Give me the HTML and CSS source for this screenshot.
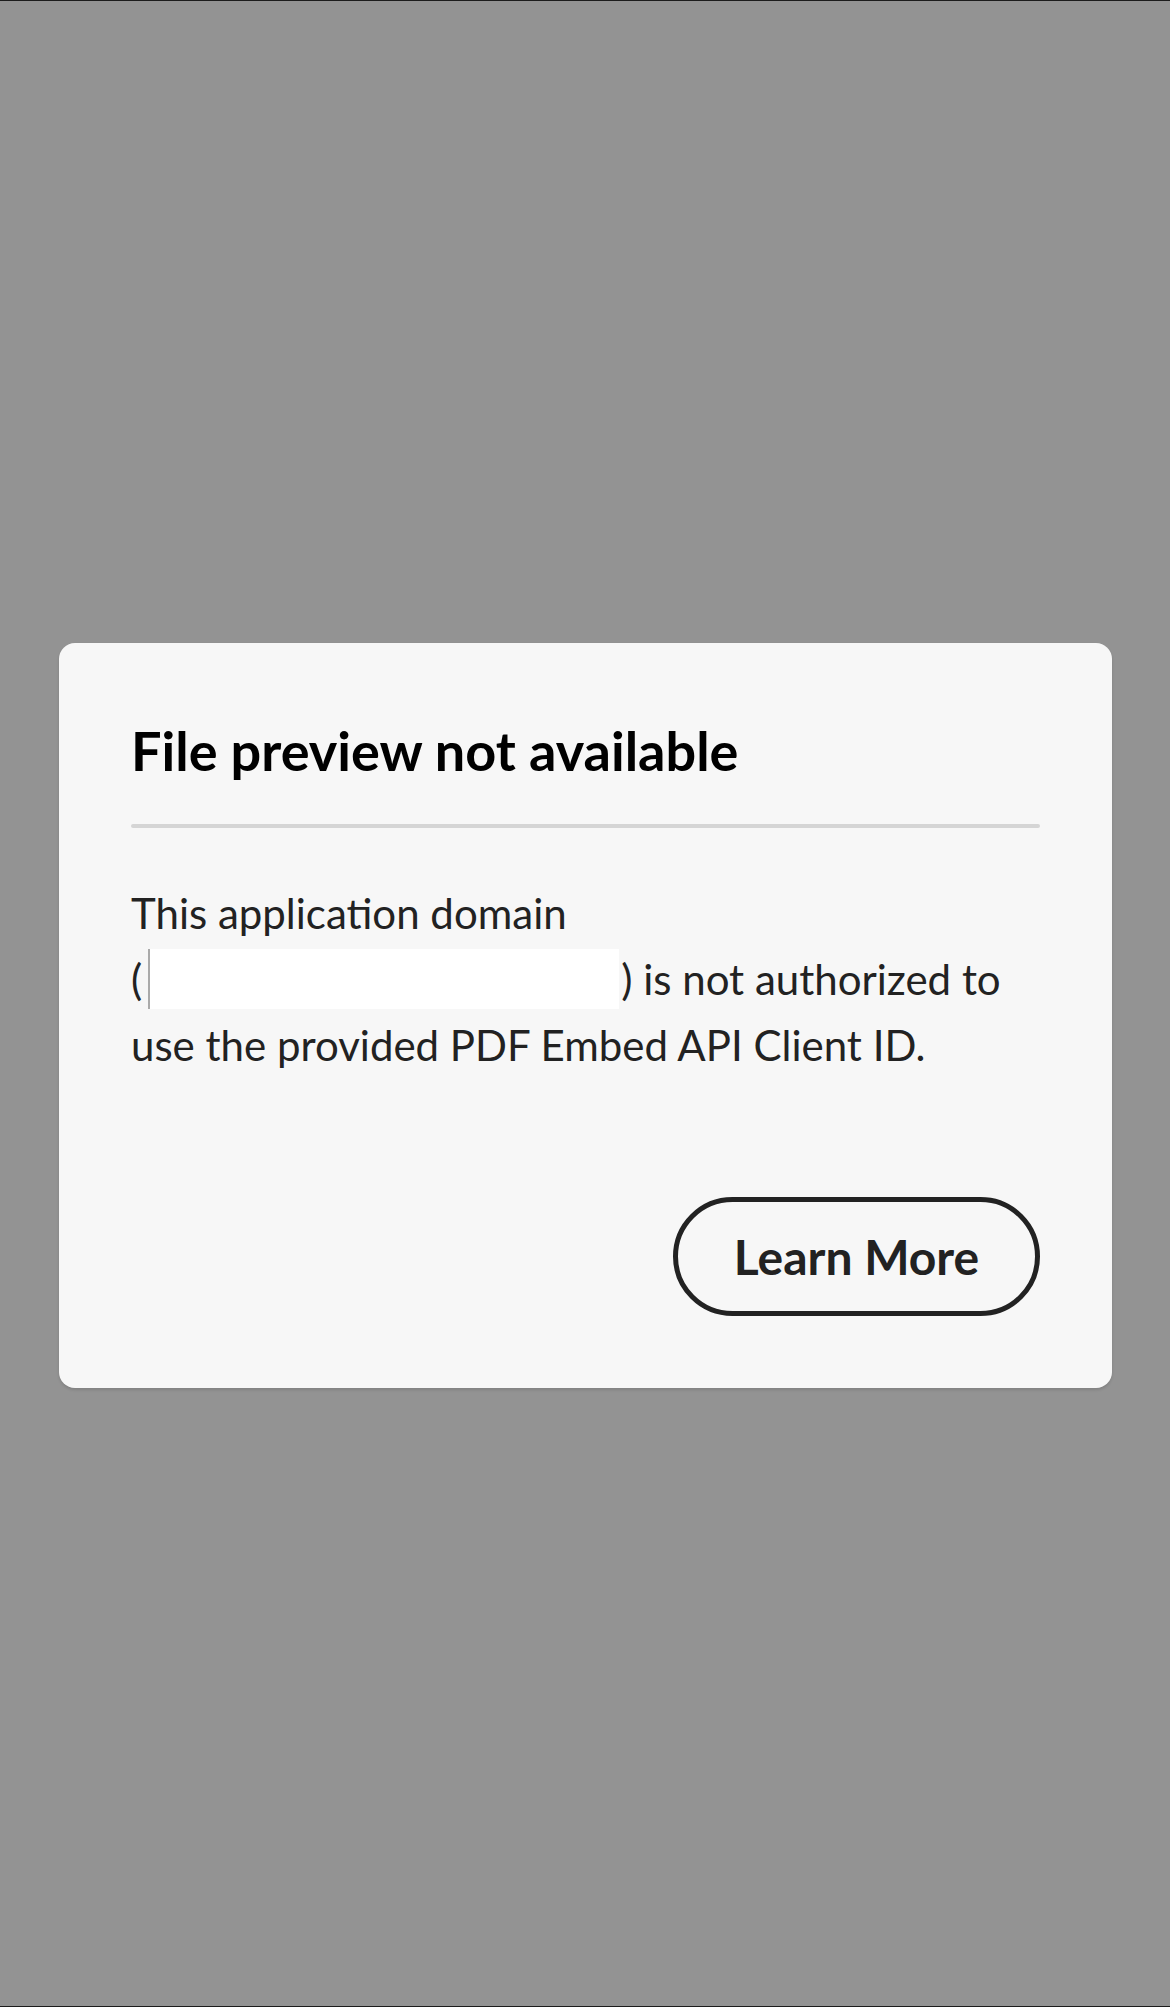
FILE: index.html
```html
<!DOCTYPE html>
<html lang="en">
<head>
    <meta charset="UTF-8">
    <meta name="viewport" content="width=device-width, initial-scale=1.0">
    <title>File preview not available</title>
    <link rel="stylesheet" href="styles.css">
</head>
<body>
    <div class="overlay">
        <div class="dialog">
            <h1 class="dialog-title">File preview not available</h1>
            <div class="divider"></div>
            <p class="dialog-text">This application domain<br>(<span class="redacted"></span>) is not authorized to use the provided PDF Embed API Client ID.</p>
            <div class="actions">
                <button class="btn-outline">Learn More</button>
            </div>
        </div>
    </div>
</body>
</html>
```

FILE: styles.css
```css
html, body {
    margin: 0;
    height: 100%;
}

body {
    background: #939393;
    font-family: Lato, "Open Sans", sans-serif;
}

.overlay {
    box-sizing: border-box;
    min-height: 100vh;
    border-top: 1px solid #1c1c1c;
    border-bottom: 1px solid #1c1c1c;
    padding-top: 24px;
    display: flex;
    align-items: center;
}

.dialog {
    flex: 1;
    margin: 0 58px 0 59px;
    background: #f7f7f7;
    border-radius: 16px;
    padding: 76px 72px 72px;
    box-shadow: 0 2px 3px rgba(0, 0, 0, 0.12);
}

.dialog-title {
    margin: 0;
    font-size: 54px;
    line-height: 64px;
    font-weight: 700;
    color: #000;
}

.divider {
    height: 4px;
    border-radius: 2px;
    background: #d5d5d5;
    margin: 41px 0 52px;
}

.dialog-text {
    margin: 0;
    font-size: 42px;
    line-height: 66px;
    color: #222;
}

.redacted {
    display: inline-block;
    width: 471px;
    height: 60px;
    margin: 0 2px 0 6px;
    vertical-align: -14px;
    background: #fff;
    border-left: 2px solid #aaa;
    box-sizing: border-box;
}

.actions {
    display: flex;
    justify-content: flex-end;
    margin-top: 119px;
}

.btn-outline {
    width: 367px;
    height: 119px;
    border: 5px solid #222;
    border-radius: 60px;
    background: transparent;
    color: #222;
    font-family: inherit;
    font-size: 48px;
    font-weight: 700;
    padding: 0;
}
```
